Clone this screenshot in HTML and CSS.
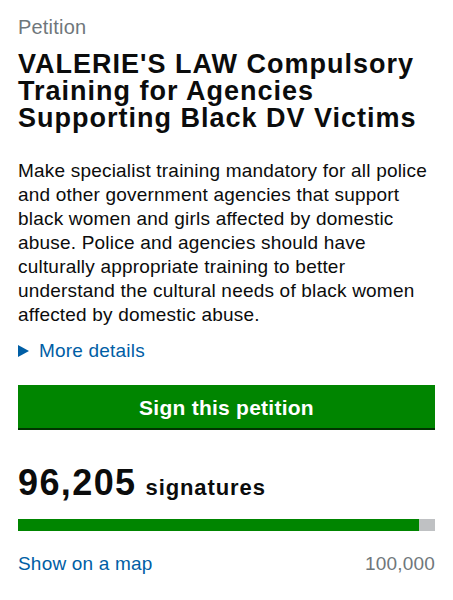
FILE: index.html
```html
<!DOCTYPE html>
<html lang="en">
<head>
<meta charset="utf-8">
<title>Petition</title>
<link rel="stylesheet" href="styles.css">
</head>
<body>
<main class="page">
  <p class="caption">Petition</p>
  <h1 class="title">VALERIE'S LAW Compulsory Training for Agencies Supporting Black DV Victims</h1>
  <p class="summary">Make specialist training mandatory for all police and other government agencies that support black women and girls affected by domestic abuse. Police and agencies should have culturally appropriate training to better understand the cultural needs of black women affected by domestic abuse.</p>
  <div class="details">
    <span class="arrow"></span>
    <a class="link" href="#">More details</a>
  </div>
  <a class="button" href="#">Sign this petition</a>
  <div class="count">
    <span class="count-number">96,205</span>
    <span class="count-label">signatures</span>
  </div>
  <div class="progress"><div class="progress-fill" style="width: 96.205%"></div></div>
  <div class="footer-row">
    <a class="link" href="#">Show on a map</a>
    <span class="target">100,000</span>
  </div>
</main>
</body>
</html>
```
FILE: styles.css
```css
html, body {
  margin: 0;
  padding: 0;
  background: #ffffff;
}
body {
  font-family: "Liberation Sans", Arial, sans-serif;
  color: #0b0c0c;
}
.page {
  padding: 0 18px;
}
.caption {
  margin: 15px 0 0;
  font-size: 20px;
  line-height: 24px;
  color: #6f777b;
  letter-spacing: 0.2px;
}
.title {
  margin: 12px 0 0;
  font-size: 27px;
  line-height: 27px;
  font-weight: bold;
  letter-spacing: 1px;
}
.summary {
  margin: 27px 0 0;
  font-size: 19px;
  line-height: 24px;
  letter-spacing: 0.2px;
}
.details {
  margin-top: 12px;
  display: flex;
  align-items: center;
  font-size: 19px;
  line-height: 24px;
  letter-spacing: 0.2px;
}
.arrow {
  width: 0;
  height: 0;
  border-top: 6px solid transparent;
  border-bottom: 6px solid transparent;
  border-left: 11px solid #005ea5;
  margin-right: 10px;
}
.link {
  color: #005ea5;
  text-decoration: none;
}
.button {
  display: block;
  margin-top: 22px;
  padding: 11px 0 8px;
  background: #008500;
  box-shadow: 0 2px 0 #003300;
  color: #ffffff;
  text-align: center;
  text-decoration: none;
  font-size: 21px;
  line-height: 24px;
  font-weight: bold;
  letter-spacing: 0.25px;
}
.count {
  margin-top: 35px;
  display: flex;
  align-items: baseline;
  gap: 9px;
  line-height: 40px;
}
.count-number {
  font-size: 36px;
  font-weight: bold;
  letter-spacing: 1.4px;
}
.count-label {
  font-size: 22px;
  font-weight: bold;
  letter-spacing: 0.9px;
}
.progress {
  margin-top: 11px;
  height: 12px;
  background: #bfc1c3;
}
.progress-fill {
  height: 100%;
  background: #008500;
}
.footer-row {
  margin-top: 21px;
  display: flex;
  justify-content: space-between;
  font-size: 19px;
  line-height: 24px;
  letter-spacing: 0.2px;
}
.target {
  color: #6f777b;
}
```
